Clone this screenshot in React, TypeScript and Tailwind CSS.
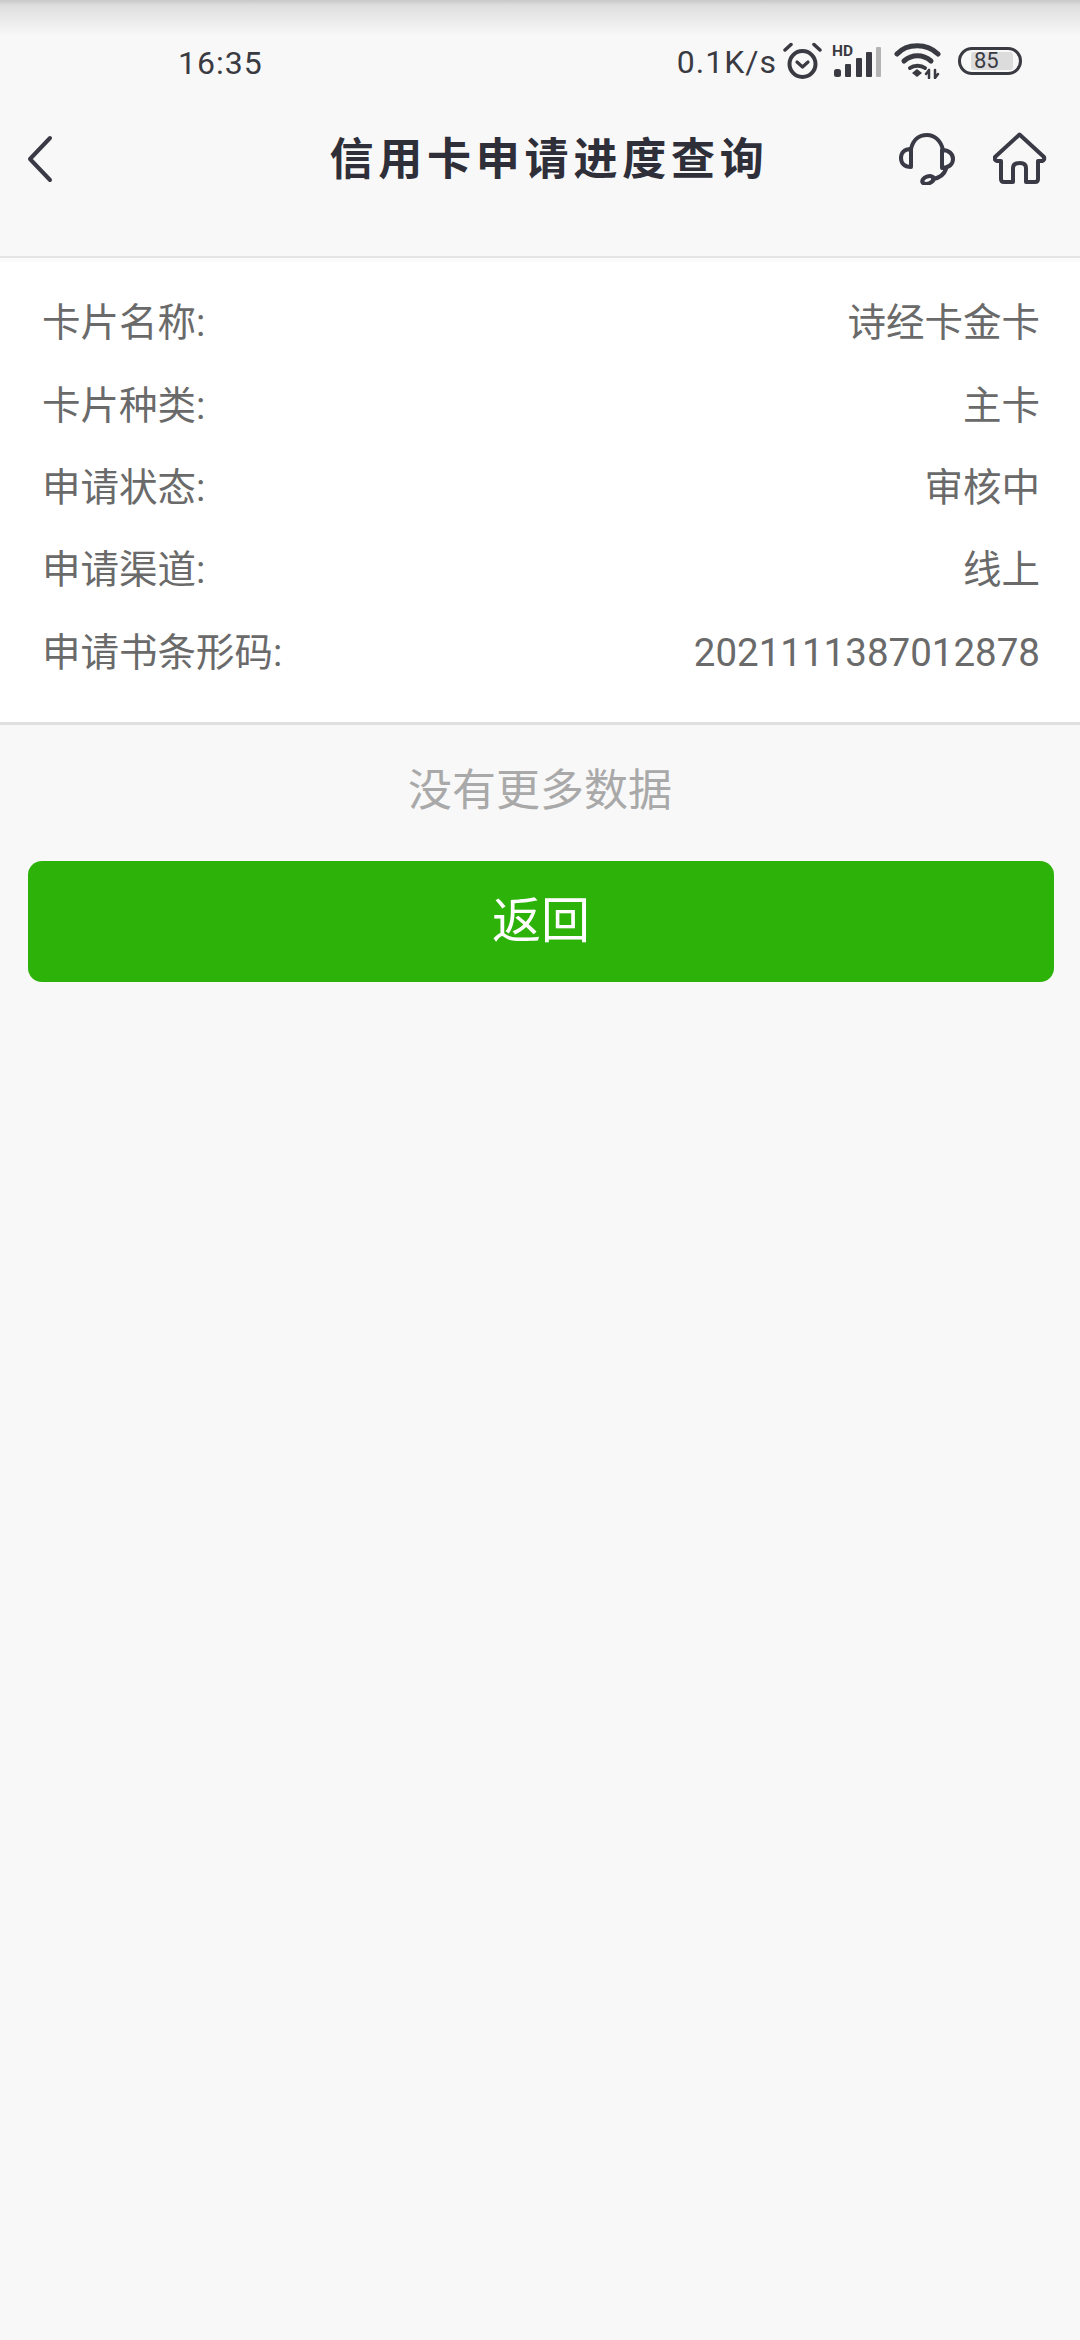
const rows = [
  { label: '卡片名称:', value: '诗经卡金卡' },
  { label: '卡片种类:', value: '主卡' },
  { label: '申请状态:', value: '审核中' },
  { label: '申请渠道:', value: '线上' },
  { label: '申请书条形码:', value: '2021111387012878' },
]

const sans = "font-['Roboto','Noto_Sans_CJK_SC',sans-serif]"

function StatusIcons() {
  return (
    <div className="mb-[2px] flex items-center">
      <svg width="40" height="38" viewBox="0 0 40 38" fill="none" stroke="#3a3a42" strokeLinecap="round">
        <circle cx="19.5" cy="22" r="13" strokeWidth="4" />
        <path d="M14 20l5.5 5 5.5-5" strokeWidth="3.2" strokeLinejoin="round" />
        <path d="M2 8l6-5.500M37 8l-6-5.500" strokeWidth="3.5" />
      </svg>
      <svg className="ml-[8px]" width="52" height="36" viewBox="0 0 52 36">
        <text x="1" y="13" fontSize="15.500" fontWeight="700" fill="#3a3a42" fontFamily="Roboto, sans-serif">HD</text>
        <g fill="#3a3a42">
          <rect x="3" y="26" width="7" height="8" rx="2.500" />
          <rect x="14" y="21" width="6" height="13" rx="1" />
          <rect x="25" y="15" width="6" height="19" rx="1" />
          <rect x="35" y="9" width="6" height="25" rx="1" />
        </g>
        <rect x="45" y="4" width="5" height="30" rx="1" fill="#b4b4b4" />
      </svg>
      <svg className="ml-[11px]" width="48" height="36" viewBox="0 0 48 36" fill="none" stroke="#3a3a42" strokeLinecap="round">
        <path d="M3 11C13 0 33 0 44 11" strokeWidth="5" />
        <path d="M10 18c8-7 19-7 27 0" strokeWidth="5" />
        <path d="M16 25c4-3 11-3 15 0" strokeWidth="4" />
        <path d="M23 26l5 4-5 4-5-4z" fill="#3a3a42" stroke="none" />
        <path d="M35 35v-8m0 0l-3 4M41 27v8m0 0l3-4" strokeWidth="2.500" />
      </svg>
      <div className="relative ml-[16px] flex h-[28px] w-[64px] items-center rounded-full border-[3px] border-[#3a3a42] pl-[13px]">
        <div className="absolute left-[10px] top-[2px] h-[18px] w-[42px] rounded-[3px] bg-[#dcdcdc]" />
        <span className="relative text-[22px] leading-none text-[#3a3a42]">85</span>
      </div>
    </div>
  )
}

function HeadsetIcon() {
  return (
    <svg width="56" height="52" viewBox="0 0 56 52" fill="none" stroke="#3a3a46" strokeWidth="4" strokeLinecap="round" strokeLinejoin="round">
      <path d="M12 16C14 7 20 2 28 2s14 6 16 15" />
      <path d="M12 16C5 16 2 20 2 25s3 9 10 9z" />
      <path d="M43 17c7 0 11 4 11 9s-4 9-11 9z" />
      <path d="M47 36c-2 6-7 9-13 10" />
      <ellipse cx="29" cy="47" rx="6" ry="3.500" transform="rotate(-20 29 47)" />
    </svg>
  )
}

function HomeIcon() {
  return (
    <svg width="54" height="54" viewBox="0 0 54 54" fill="none" stroke="#3a3a46" strokeWidth="4" strokeLinecap="round" strokeLinejoin="round">
      <path d="M26.500 2.500L51 25q1 3-2 4h-4v18q0 3-3 3h-9V36q0-5-6-5-7 0-7 5v14h-9q-3 0-3-3V29H4q-3-1-2-4z" />
    </svg>
  )
}

export default function App() {
  return (
    <div className={`relative min-h-[2340px] w-[1080px] bg-[#f8f8f8] ${sans}`}>
      <div className="pointer-events-none absolute inset-x-0 top-0 h-[36px] bg-[linear-gradient(#c8c8c8_0px,#dddddd_5px,#e4e4e4_12px,#f8f8f8_36px)]" />

      <div className="relative flex h-[90px] items-end justify-between pb-[8px] pl-[178px] pr-[58px]">
        <span className="text-[32px] leading-[38px] tracking-[1px] text-[#3a3a42]">16:35</span>
        <div className="flex items-center gap-[6px]">
          <span className="text-[32px] leading-[38px] tracking-[1px] text-[#3a3a42]">0.1K/s</span>
          <StatusIcons />
        </div>
      </div>

      <header className="relative flex h-[168px] items-center justify-center border-b-2 border-[#e4e4e4] pb-[26px]">
        <svg className="absolute left-[26px] top-[45px]" width="28" height="48" viewBox="0 0 28 48" fill="none" stroke="#3a3a46" strokeWidth="4" strokeLinecap="round" strokeLinejoin="round">
          <path d="M24 3L4 24l20 21" />
        </svg>
        <h1 className="ml-[18px] text-[44px] font-bold leading-none tracking-[4.800px] text-[#2f2f3a]">信用卡申请进度查询</h1>
        <div className="absolute right-[33px] top-[42px] flex items-center gap-[38px]">
          <HeadsetIcon />
          <HomeIcon />
        </div>
      </header>

      <section className="border-t-[4px] border-b-[3px] border-t-[#fbfbfb] border-b-[#dfdfdf] bg-white pb-[28px] pl-[42px] pr-[40px] pt-[20px]">
        {rows.map((row) => (
          <div key={row.label} className="flex h-[82.400px] items-center justify-between text-[38.500px] text-[#6a6a6a]">
            <span>{row.label}</span>
            <span>{row.value}</span>
          </div>
        ))}
      </section>

      <p className="mt-[43px] text-center text-[44px] leading-[46px] text-[#a9a9a9]">没有更多数据</p>

      <button className="mx-[28px] mt-[47px] flex h-[121px] w-[1026px] items-center justify-center rounded-[14px] bg-[#2cb208] text-[49px] text-white">
        返回
      </button>
    </div>
  )
}
